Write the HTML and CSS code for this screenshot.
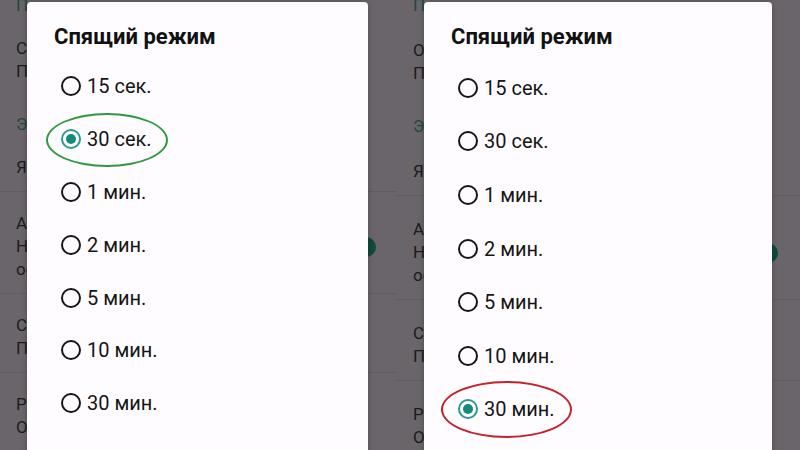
FILE: index.html
```html
<!DOCTYPE html>
<html lang="ru">
<head>
<meta charset="utf-8">
<title>Спящий режим</title>
<link rel="stylesheet" href="styles.css">
</head>
<body>
<div class="screens">
  <section class="screen left">
    <div class="settings">
      <div class="header">Параметры</div>
      <div class="item"><div class="line">Стиль шрифта</div><div class="line">По умолчанию</div></div>
      <div class="header header-gap">Экран</div>
      <div class="item"><div class="line">Яркость</div></div>
      <div class="divider"></div>
      <div class="item with-toggle">
        <div class="texts"><div class="line">Адаптивная яркость</div><div class="line">Настройка уровня</div><div class="line">освещения</div></div>
        <span class="toggle"></span>
      </div>
      <div class="divider"></div>
      <div class="item"><div class="line">Спящий режим</div><div class="line">После 30 сек.</div></div>
      <div class="divider"></div>
      <div class="item"><div class="line">Режим</div><div class="line">Отключено</div></div>
    </div>
    <div class="dialog">
      <h2 class="dialog-title">Спящий режим</h2>
      <ul class="options">
        <li class="option"><span class="radio"></span><span class="label">15 сек.</span></li>
        <li class="option"><span class="radio checked"></span><span class="label">30 сек.</span></li>
        <li class="option"><span class="radio"></span><span class="label">1 мин.</span></li>
        <li class="option"><span class="radio"></span><span class="label">2 мин.</span></li>
        <li class="option"><span class="radio"></span><span class="label">5 мин.</span></li>
        <li class="option"><span class="radio"></span><span class="label">10 мин.</span></li>
        <li class="option"><span class="radio"></span><span class="label">30 мин.</span></li>
      </ul>
    </div>
    <div class="mark mark-green"></div>
  </section>
  <section class="screen right">
    <div class="settings">
      <div class="header">Параметры</div>
      <div class="item"><div class="line">Отображение</div><div class="line">По умолчанию</div></div>
      <div class="header header-gap">Экран</div>
      <div class="item"><div class="line">Яркость</div></div>
      <div class="divider"></div>
      <div class="item with-toggle">
        <div class="texts"><div class="line">Адаптивная яркость</div><div class="line">Настройка уровня</div><div class="line">освещения</div></div>
        <span class="toggle"></span>
      </div>
      <div class="divider"></div>
      <div class="item"><div class="line">Спящий режим</div><div class="line">После 30 мин.</div></div>
      <div class="divider"></div>
      <div class="item"><div class="line">Режим</div><div class="line">Отключено</div></div>
    </div>
    <div class="dialog">
      <h2 class="dialog-title">Спящий режим</h2>
      <ul class="options">
        <li class="option"><span class="radio"></span><span class="label">15 сек.</span></li>
        <li class="option"><span class="radio"></span><span class="label">30 сек.</span></li>
        <li class="option"><span class="radio"></span><span class="label">1 мин.</span></li>
        <li class="option"><span class="radio"></span><span class="label">2 мин.</span></li>
        <li class="option"><span class="radio"></span><span class="label">5 мин.</span></li>
        <li class="option"><span class="radio"></span><span class="label">10 мин.</span></li>
        <li class="option"><span class="radio checked"></span><span class="label">30 мин.</span></li>
      </ul>
    </div>
    <div class="mark mark-red"></div>
  </section>
</div>
</body>
</html>
```
FILE: styles.css
```css
* { box-sizing: border-box; }

html, body {
  margin: 0;
  padding: 0;
  background: #6a656a;
}

body {
  font-family: Roboto, "Noto Sans", "Liberation Sans", sans-serif;
}

.screens {
  display: flex;
  width: 800px;
  height: 450px;
  overflow: hidden;
}

.screen {
  position: relative;
  height: 450px;
  overflow: hidden;
  background: #6a656a;
}

.screen.left { width: 396px; }
.screen.right { flex: 1; }

/* background settings list (dimmed by scrim) */
.settings {
  margin-top: -6px;
  font-size: 17px;
  line-height: 23px;
  color: #1d1b1e;
}

.header {
  padding-left: 16px;
  color: #1c4a3f;
}

.header-gap { padding-top: 18px; }

.item {
  padding: 20px 20px 12px 16px;
}

.right .item { padding-top: 22px; padding-left: 17px; padding-right: 22px; }
.right .header { padding-left: 17px; }

.with-toggle {
  display: flex;
  align-items: center;
  justify-content: space-between;
}

.toggle {
  width: 20px;
  height: 20px;
  border-radius: 50%;
  background: #0e4a3d;
}

.divider {
  height: 1px;
  background: #615c61;
}

/* dialog */
.dialog {
  position: absolute;
  top: 2px;
  left: 27px;
  width: 341px;
  height: 470px;
  background: #fefcff;
  border-radius: 4px;
  box-shadow: 0 0 6px rgba(0, 0, 0, 0.25);
  padding: 21px 0 0 27px;
}

.right .dialog {
  left: 28px;
  width: 348px;
}

.dialog-title {
  margin: 0;
  font-size: 22px;
  line-height: 28px;
  font-weight: 700;
  color: #111;
}

.options {
  list-style: none;
  margin: 9px 0 0;
  padding: 0;
}

.right .options { margin-top: 10px; }

.option {
  display: flex;
  align-items: center;
  gap: 6px;
  height: 52.8px;
  padding-left: 7px;
}

.right .option { height: 53.6px; }

.radio {
  position: relative;
  width: 20px;
  height: 20px;
  border: 2.4px solid #151515;
  border-radius: 50%;
  flex: none;
}

.radio.checked {
  border-color: #2a9c8f;
}

.radio.checked::after {
  content: "";
  position: absolute;
  left: 50%;
  top: 50%;
  width: 10px;
  height: 10px;
  margin: -5px 0 0 -5px;
  border-radius: 50%;
  background: #158a7c;
}

.label {
  font-size: 20px;
  color: #151515;
}

/* annotation marks */
.mark {
  position: absolute;
  border-radius: 50%;
  border: 2px solid;
}

.mark-green {
  left: 46px;
  top: 113px;
  width: 122px;
  height: 54px;
  border-color: #2f9a3e;
}

.mark-red {
  left: 45px;
  top: 381px;
  width: 131px;
  height: 57px;
  border-color: #c4222c;
}
```
